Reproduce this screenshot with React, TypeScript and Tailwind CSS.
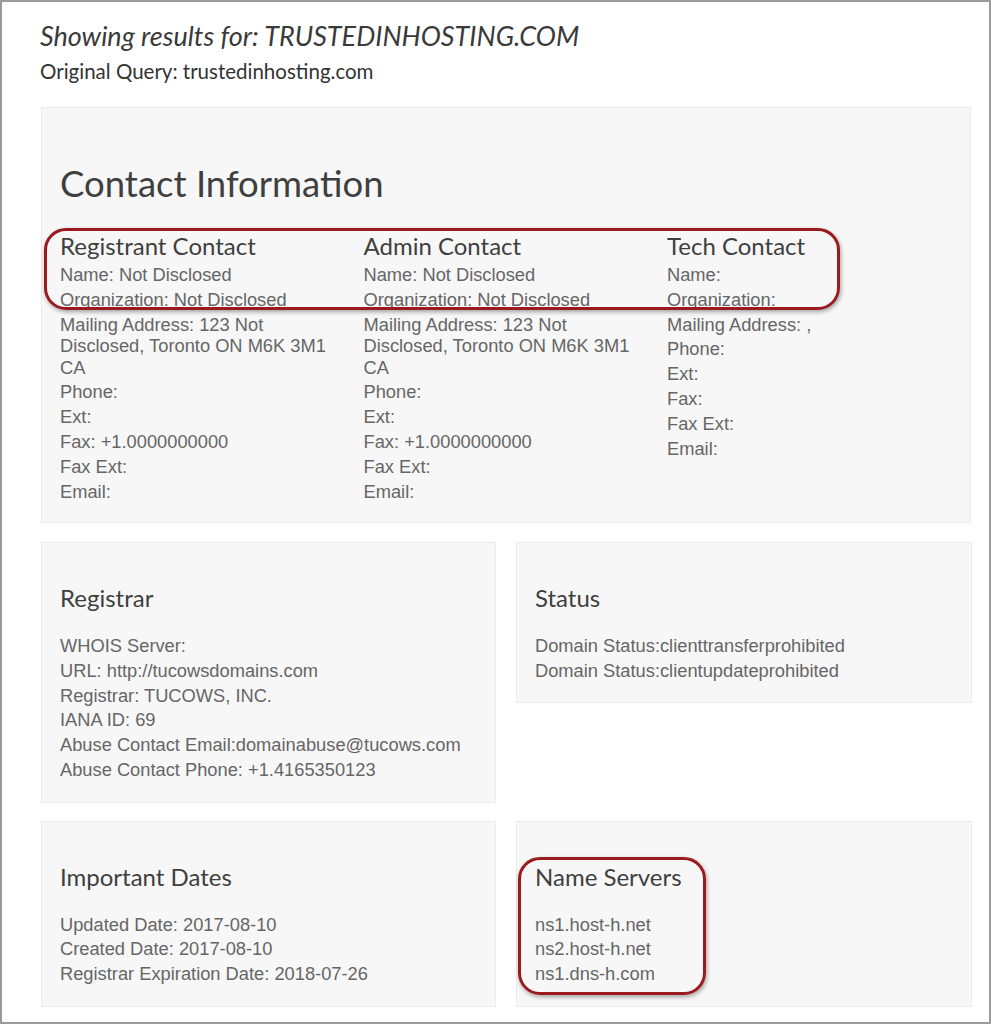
import React from "react";

const contacts = [
  {
    title: "Registrant Contact",
    lines: [
      "Name: Not Disclosed",
      "Organization: Not Disclosed",
      "Mailing Address: 123 Not Disclosed, Toronto ON M6K 3M1 CA",
      "Phone:",
      "Ext:",
      "Fax: +1.0000000000",
      "Fax Ext:",
      "Email:",
    ],
  },
  {
    title: "Admin Contact",
    lines: [
      "Name: Not Disclosed",
      "Organization: Not Disclosed",
      "Mailing Address: 123 Not Disclosed, Toronto ON M6K 3M1 CA",
      "Phone:",
      "Ext:",
      "Fax: +1.0000000000",
      "Fax Ext:",
      "Email:",
    ],
  },
  {
    title: "Tech Contact",
    lines: ["Name:", "Organization:", "Mailing Address: ,", "Phone:", "Ext:", "Fax:", "Fax Ext:", "Email:"],
  },
];

const lato = { fontFamily: "Lato, 'Open Sans', sans-serif" };

function Lines({ items }: { items: string[] }) {
  return (
    <div className="flex flex-col gap-[3.3px] text-[18.3px] leading-[21.5px] text-[#666]" style={{ fontFamily: "'Liberation Sans', Arial, sans-serif" }}>
      {items.map((t, i) => (
        <div key={i}>{t}</div>
      ))}
    </div>
  );
}

function Panel({ title, items }: { title: string; items: string[] }) {
  return (
    <div className="bg-[#f7f7f7] border border-[#ebebeb] pt-[42px] pb-[21px] px-[18px]">
      <h3 className="text-[24px] leading-[26px] text-[#3f3f3f] mb-[24px]" style={lato}>
        {title}
      </h3>
      <Lines items={items} />
    </div>
  );
}

export default function App() {
  return (
    <div className="relative w-[991px] h-[1024px] border-2 border-[#9a9a9a] bg-white overflow-hidden">
      <div className="pl-[38px] pt-[18px]">
        <h1 className="italic text-[27px] leading-[32px] text-[#3a3a3a]" style={lato}>
          Showing results for: TRUSTEDINHOSTING.COM
        </h1>
        <p className="text-[20.5px] leading-[26px] mt-[6px] text-[#333]" style={lato}>
          Original Query: trustedinhosting.com
        </p>
      </div>

      <div className="ml-[39px] mr-[18px] mt-[23px]">
        {/* contact info */}
        <div className="bg-[#f7f7f7] border border-[#ebebeb] pt-[55px] pb-[20px] pl-[18px]">
          <h2 className="text-[36.5px] leading-[40px] text-[#3f3f3f] mb-[30px]" style={lato}>
            Contact Information
          </h2>
          <div className="grid grid-cols-[303.5px_303.5px_303px]">
            {contacts.map((c) => (
              <div key={c.title} className="pr-[30px]">
                <h3 className="text-[24px] leading-[26px] text-[#3f3f3f] mb-[5px]" style={lato}>
                  {c.title}
                </h3>
                <Lines items={c.lines} />
              </div>
            ))}
          </div>
        </div>

        <div className="grid grid-cols-[455px_456px] gap-x-[20px] gap-y-[18px] mt-[19px] items-start">
          <Panel
            title="Registrar"
            items={[
              "WHOIS Server:",
              "URL: http://tucowsdomains.com",
              "Registrar: TUCOWS, INC.",
              "IANA ID: 69",
              "Abuse Contact Email:domainabuse@tucows.com",
              "Abuse Contact Phone: +1.4165350123",
            ]}
          />
          <Panel title="Status" items={["Domain Status:clienttransferprohibited", "Domain Status:clientupdateprohibited"]} />
          <Panel
            title="Important Dates"
            items={["Updated Date: 2017-08-10", "Created Date: 2017-08-10", "Registrar Expiration Date: 2018-07-26"]}
          />
          <Panel title="Name Servers" items={["ns1.host-h.net", "ns2.host-h.net", "ns1.dns-h.com"]} />
        </div>
      </div>

      {/* annotation outlines */}
      <div className="absolute left-[42px] top-[226px] w-[796px] h-[82px] border-[3px] border-[#9b1a1f] rounded-[22px] shadow-[1px_2px_4px_rgba(0,0,0,0.35)]" />
      <div className="absolute left-[516px] top-[855px] w-[188px] h-[138px] border-[3px] border-[#9b1a1f] rounded-[22px] shadow-[1px_2px_4px_rgba(0,0,0,0.35)]" />
    </div>
  );
}
